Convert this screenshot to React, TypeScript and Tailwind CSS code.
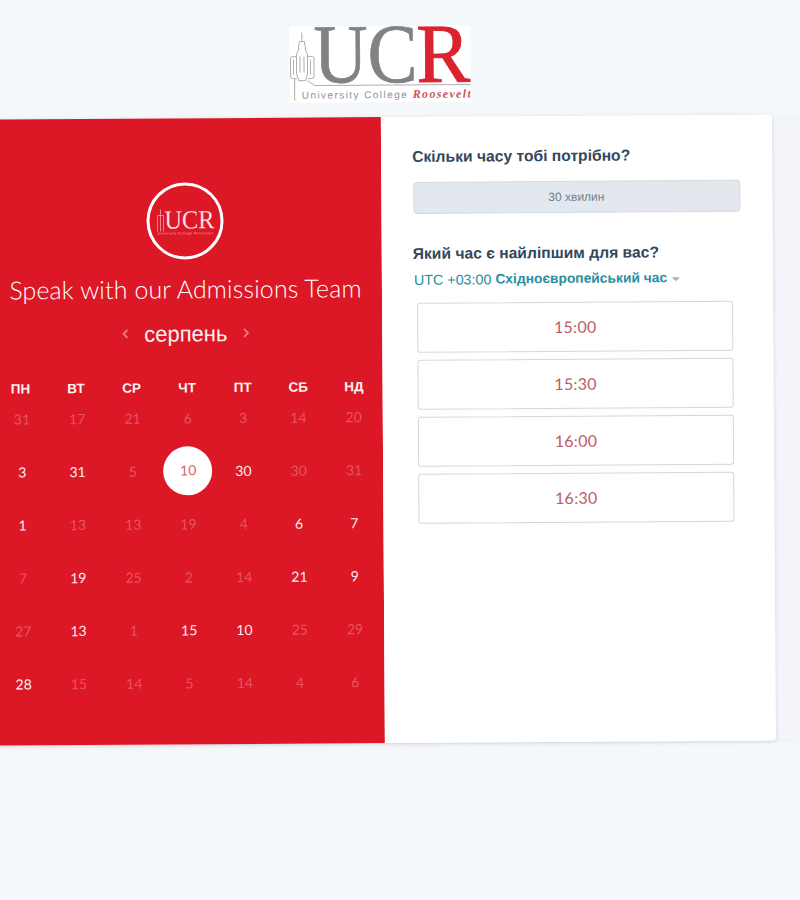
import React from "react";
import { ChevronLeft, ChevronRight } from "lucide-react";

const rows: [number, boolean][][] = [
  [[31,false],[17,false],[21,false],[6,false],[3,false],[14,false],[20,false]],
  [[3,true],[31,true],[5,false],[10,true],[30,true],[30,false],[31,false]],
  [[1,true],[13,false],[13,false],[19,false],[4,false],[6,true],[7,true]],
  [[7,false],[19,true],[25,false],[2,false],[14,false],[21,true],[9,true]],
  [[27,false],[13,true],[1,false],[15,true],[10,true],[25,false],[29,false]],
  [[28,true],[15,false],[14,false],[5,false],[14,false],[4,false],[6,false]],
];
const weekdays = ["ПН","ВТ","СР","ЧТ","ПТ","СБ","НД"];
const times = ["15:00","15:30","16:00","16:30"];

function Building({ color }: { color: string }) {
  return (
    <g fill="none" stroke={color} strokeWidth="0.9">
      <path d="M12.5 6V15M10 15h5l1 6v3l2 3v20l-2 7M10 15l-1 6v3l-2 3v20l2 7M9 54h7" />
      <path d="M7 30H2.5q-1.5 0-1.5 2v18q0 2 3 2h3M18 30h5q1.5 0 1.5 2v18q0 2-3 2h-3" />
      <path d="M10.5 30v16M14.5 30v16M4 33v15M21 33v15" />
      <path d="M5 52V74" />
      <path d="M18 54l7 5H181" />
    </g>
  );
}

function Logo() {
  return (
    <div className="w-[181px] h-[76px] bg-white">
      <svg width="181" height="76" viewBox="0 0 181 76">
        <Building color="#a3a5a8" />
        <text x="24" y="56" fontFamily="'Liberation Serif', serif" fontSize="84" fill="#808285" stroke="#808285" strokeWidth="0.7" textLength="104" lengthAdjust="spacingAndGlyphs">UC</text>
        <text x="127" y="56" fontFamily="'Liberation Serif', serif" fontSize="84" fill="#d9232e" stroke="#d9232e" strokeWidth="0.9" textLength="54" lengthAdjust="spacingAndGlyphs">R</text>
        <text x="12" y="72" fontFamily="'Liberation Sans', sans-serif" fontSize="10" fill="#909295" textLength="105">University College</text>
        <text x="123" y="72" fontFamily="'Liberation Serif', serif" fontSize="12" fontStyle="italic" fontWeight="700" fill="#c8565e" textLength="58">Roosevelt</text>
      </svg>
    </div>
  );
}

function Badge() {
  return (
    <div className="w-[77px] h-[77px] rounded-full border-[3px] border-white flex items-center justify-center">
      <svg width="60" height="40" viewBox="0 0 60 40">
        <g fill="none" stroke="#f5b5ba" strokeWidth="0.7">
          <path d="M5 8V30M2 14V30M8 14V30M2 14h6" />
        </g>
        <text x="9" y="27" fontFamily="'Liberation Serif', serif" fontSize="26" fill="#f9dfe1" textLength="50" lengthAdjust="spacingAndGlyphs">UCR</text>
        <text x="2" y="33" fontFamily="'Liberation Sans', sans-serif" fontSize="3.4" fill="#f5b5ba" textLength="55">University College Roosevelt</text>
      </svg>
    </div>
  );
}

export default function App() {
  return (
    <div className="w-[800px] h-[900px] overflow-hidden bg-[#f5f8fb] font-['Liberation_Sans',sans-serif]">
      <div className="h-[900px] rotate-[-0.37deg] flex flex-col">
        <div className="pt-[26px] pl-[292px]">
          <Logo />
        </div>
        <div className="mt-[15px] h-[627px] w-[830px] -ml-[9px] bg-[#f3f5fb] border-b border-[#eef1f5]">
          <div className="flex h-[626px] w-[783px] rounded-sm shadow-[0_1px_4px_rgba(45,62,80,0.18)]">
            <div className="w-[392px] bg-[#dc1726] text-white flex flex-col items-center pt-[64px] pr-[1px]">
              <Badge />
              <h1 className="mt-[12px] h-[34px] leading-[34px] text-[25px] font-light tracking-[0.1px] whitespace-nowrap font-['Lato',sans-serif] text-white">Speak with our Admissions Team</h1>
              <div className="mt-[15px] h-[28px] flex items-center gap-[12px]">
                <ChevronLeft size={14} strokeWidth={3} className="text-[#ec8089] -mt-[2px]" />
                <span className="text-[22px] leading-[28px] text-[#fdeeee]">серпень</span>
                <ChevronRight size={14} strokeWidth={3} className="text-[#ec8089] -mt-[2px]" />
              </div>
              <div className="mt-[31px] w-[389px] ml-[2px] grid grid-cols-7">
                {weekdays.map((d) => (
                  <div key={d} className="h-[18px] leading-[18px] text-center text-[13.5px] font-bold text-[#fdf2f2]">{d}</div>
                ))}
              </div>
              <div className="-mt-[6px] w-[387px] ml-[3px] grid grid-cols-7 auto-rows-[53px] font-['Lato',sans-serif] text-[14px]">
                {rows.flatMap((row, i) =>
                  row.map(([n, on], j) => {
                    const selected = i === 1 && j === 3;
                    return (
                      <div key={`${i}-${j}`} className="flex items-center justify-center">
                        {selected ? (
                          <span className="w-[49px] h-[49px] rounded-full bg-white flex items-center justify-center text-[#d9606a] pb-[2px]">{n}</span>
                        ) : (
                          <span className={on ? "text-[#fdeeee]" : "text-[#e65462]"}>{n}</span>
                        )}
                      </div>
                    );
                  })
                )}
              </div>
            </div>
            <div className="w-[391px] bg-white rounded-r-sm pl-[31px] pt-[30px]">
              <h2 className="h-[20px] leading-[20px] text-[15.65px] font-bold text-[#33475b]">Скільки часу тобі потрібно?</h2>
              <div className="mt-[14.5px] ml-[0.5px] w-[327px] h-[32px] rounded-sm border border-[#d3dae3] bg-[#e3e7ee] flex items-center justify-center text-[12px] text-[#6f7f8f]">30 хвилин</div>
              <h2 className="mt-[30.5px] h-[20px] leading-[20px] text-[15.65px] font-bold text-[#33475b]">Який час є найліпшим для вас?</h2>
              <div className="mt-[5.5px] ml-[1px] h-[20px] leading-[20px] text-[14px] text-[#2a8ea0] flex items-center whitespace-nowrap">
                <span className="text-[14.3px]">UTC +03:00</span>
                <span className="ml-[4px] font-bold text-[13.8px]">Східноєвропейський час</span>
                <span className="ml-[5px] mt-[2px] w-0 h-0 border-x-[4px] border-x-transparent border-t-[4px] border-t-[#a3b3c2]"></span>
              </div>
              <div className="mt-[13.4px] ml-[4px] w-[316px] flex flex-col gap-[7px]">
                {times.map((t) => (
                  <div key={t} className="h-[50px] rounded-[3px] border border-[#d3d8de] bg-white flex items-center justify-center text-[16px] font-['Lato',sans-serif] text-[#bd5a64] tracking-[0.3px]">{t}</div>
                ))}
              </div>
            </div>
          </div>
        </div>
      </div>
    </div>
  );
}
